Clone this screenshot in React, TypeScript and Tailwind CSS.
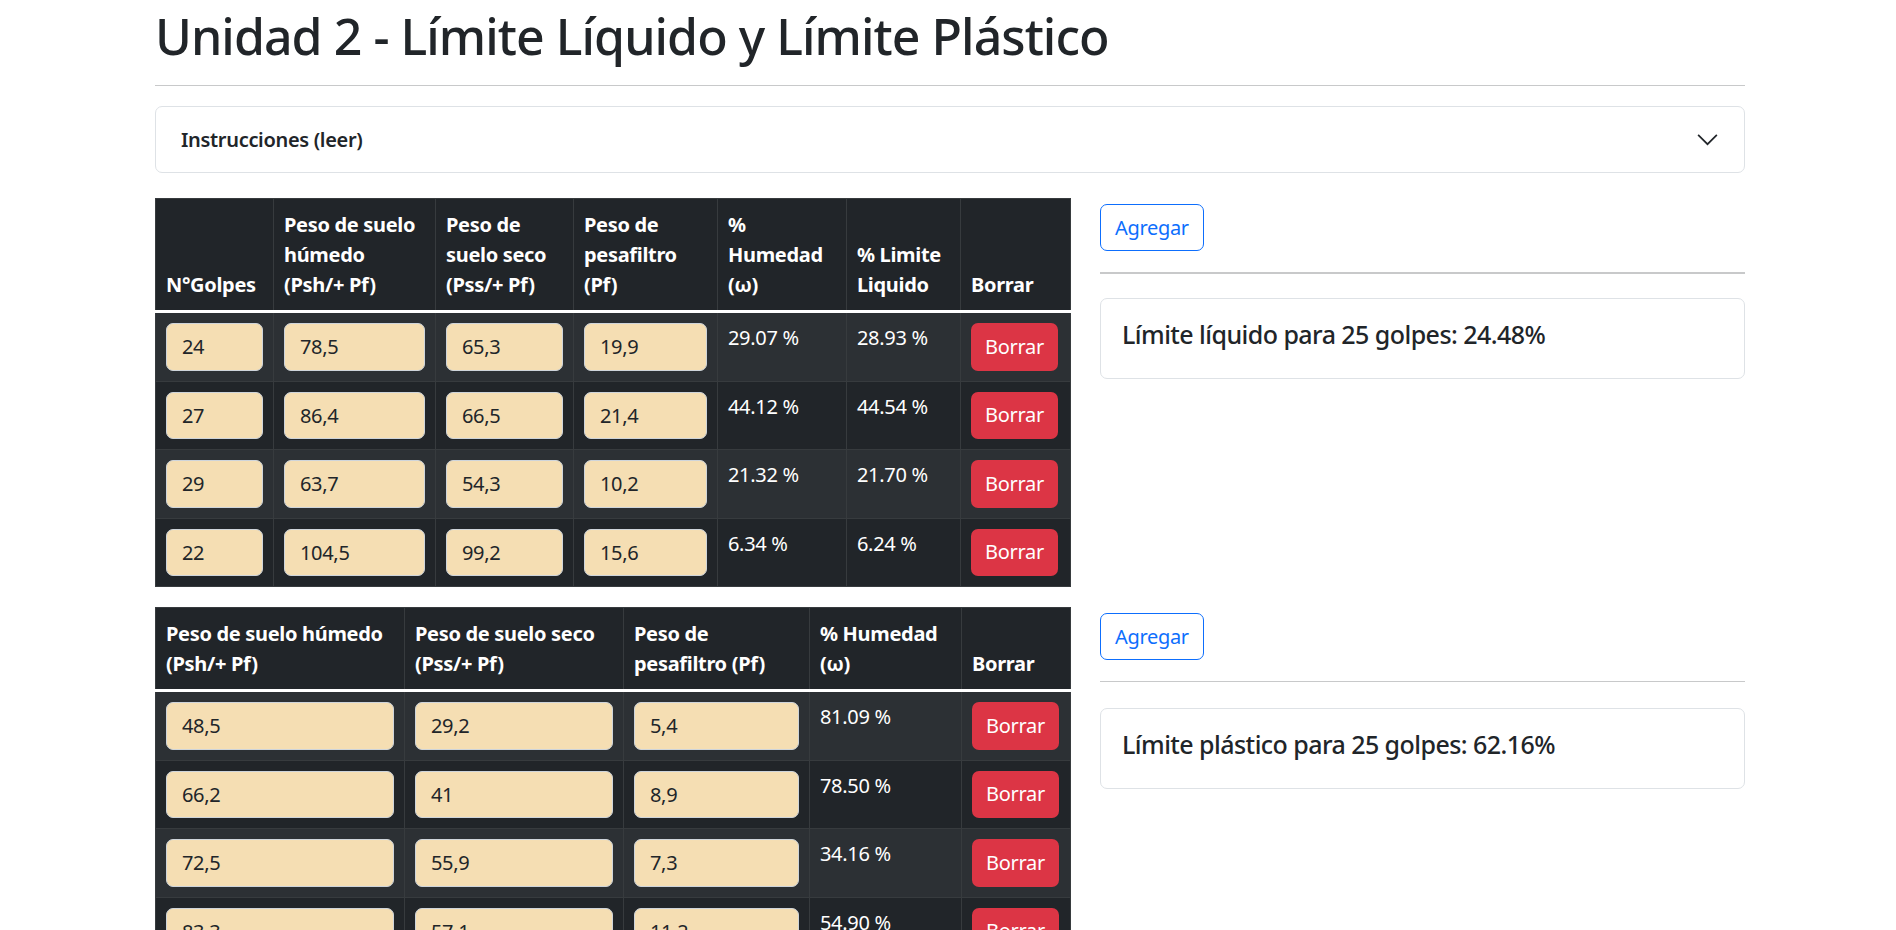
import React from "react"

const liquidRows = [
  ["24", "78,5", "65,3", "19,9", "29.07 %", "28.93 %"],
  ["27", "86,4", "66,5", "21,4", "44.12 %", "44.54 %"],
  ["29", "63,7", "54,3", "10,2", "21.32 %", "21.70 %"],
  ["22", "104,5", "99,2", "15,6", "6.34 %", "6.24 %"],
]

const plasticRows = [
  ["48,5", "29,2", "5,4", "81.09 %"],
  ["66,2", "41", "8,9", "78.50 %"],
  ["72,5", "55,9", "7,3", "34.16 %"],
  ["83,3", "57,1", "11,2", "54.90 %"],
]

function Field({ value }: { value: string }) {
  return (
    <input
      defaultValue={value}
      className="block w-full h-[47.5px] rounded-[7px] border border-[#ced4da] bg-[#f5deb3] px-[15px] text-[20px] leading-[30px] text-[#212529] outline-none"
    />
  )
}

function DeleteButton() {
  return (
    <button className="h-[47.5px] w-[87px] rounded-[7px] bg-[#dc3545] text-[20px] leading-[30px] text-white">
      Borrar
    </button>
  )
}

function SidePanel({ label, hrClass }: { label: string; hrClass: string }) {
  return (
    <div className="flex flex-col">
      <button className="self-start h-[47px] rounded-[7px] border border-[#0d6efd] px-[14px] text-[20px] leading-[30px] text-[#0d6efd]">
        Agregar
      </button>
      <div className={hrClass} />
      <div className="h-[81px] rounded-[7px] border border-[#dee2e6] px-[21px] pt-[20px]">
        <h5 className="text-[25px] leading-[30px] font-medium tracking-[-0.022em] text-[#212529]">{label}</h5>
      </div>
    </div>
  )
}

const th = "border border-[#373b3e] px-[10px] pt-[11px] pb-[10px] text-left align-bottom font-bold whitespace-nowrap"
const td = "border border-[#373b3e] p-[10px] align-top"
const first = "border-t-[3px] border-t-white"

export default function App() {
  return (
    <div className="min-h-screen bg-white font-['Noto_Sans',sans-serif] text-[#212529] tracking-[-0.02em]">
      <div className="ml-[155px] w-[1590px] pt-[6px]">
        <h1 className="text-[50px] leading-[60px] font-medium tracking-[-0.019em]">Unidad 2 - Límite Líquido y Límite Plástico</h1>
        <div className="mt-[19px] h-px bg-[#c8c9ca]" />

        <div className="mt-[20px] flex h-[67px] items-center justify-between rounded-[7px] border border-[#dee2e6] pl-[25px] pr-[24px]">
          <span className="text-[20px] font-semibold">Instrucciones (leer)</span>
          <svg width="25" height="25" viewBox="0 0 16 16" fill="none">
            <path d="M2 5L8 11L14 5" stroke="#212529" strokeWidth="1.1" />
          </svg>
        </div>

        <div className="mt-[25px] flex gap-[30px]">
          <div className="w-[915px]">
            <table className="w-[915px] table-fixed bg-[#212529] text-[20px] leading-[30px] text-white">
              <colgroup>
                <col className="w-[118px]" />
                <col className="w-[162px]" />
                <col className="w-[138px]" />
                <col className="w-[144px]" />
                <col className="w-[129px]" />
                <col className="w-[114px]" />
                <col className="w-[110px]" />
              </colgroup>
              <thead>
                <tr>
                  <th className={th}>N°Golpes</th>
                  <th className={th}>Peso de suelo<br />húmedo<br />(Psh/+ Pf)</th>
                  <th className={th}>Peso de<br />suelo seco<br />(Pss/+ Pf)</th>
                  <th className={th}>Peso de<br />pesafiltro<br />(Pf)</th>
                  <th className={th}>%<br />Humedad<br />(ω)</th>
                  <th className={th}>% Limite<br />Liquido</th>
                  <th className={th}>Borrar</th>
                </tr>
              </thead>
              <tbody>
                {liquidRows.map((r, i) => (
                  <tr key={i} className={i % 2 === 0 ? "bg-[#2c3034]" : "bg-[#212529]"}>
                    {r.slice(0, 4).map((v, j) => (
                      <td key={j} className={`${td} ${i === 0 ? first : ""}`}>
                        <Field value={v} />
                      </td>
                    ))}
                    <td className={`${td} ${i === 0 ? first : ""}`}>{r[4]}</td>
                    <td className={`${td} ${i === 0 ? first : ""}`}>{r[5]}</td>
                    <td className={`${td} ${i === 0 ? first : ""}`}>
                      <DeleteButton />
                    </td>
                  </tr>
                ))}
              </tbody>
            </table>

            <table className="mt-[20px] w-[915px] table-fixed bg-[#212529] text-[20px] leading-[30px] text-white">
              <colgroup>
                <col className="w-[249px]" />
                <col className="w-[219px]" />
                <col className="w-[186px]" />
                <col className="w-[152px]" />
                <col className="w-[109px]" />
              </colgroup>
              <thead>
                <tr>
                  <th className={th}>Peso de suelo húmedo<br />(Psh/+ Pf)</th>
                  <th className={th}>Peso de suelo seco<br />(Pss/+ Pf)</th>
                  <th className={th}>Peso de<br />pesafiltro (Pf)</th>
                  <th className={th}>% Humedad<br />(ω)</th>
                  <th className={th}>Borrar</th>
                </tr>
              </thead>
              <tbody>
                {plasticRows.map((r, i) => (
                  <tr key={i} className={i % 2 === 0 ? "bg-[#2c3034]" : "bg-[#212529]"}>
                    {r.slice(0, 3).map((v, j) => (
                      <td key={j} className={`${td} ${i === 0 ? first : ""}`}>
                        <Field value={v} />
                      </td>
                    ))}
                    <td className={`${td} ${i === 0 ? first : ""}`}>{r[3]}</td>
                    <td className={`${td} ${i === 0 ? first : ""}`}>
                      <DeleteButton />
                    </td>
                  </tr>
                ))}
              </tbody>
            </table>
          </div>

          <div className="w-[645px]">
            <div className="pt-[6px]">
              <SidePanel label="Límite líquido para 25 golpes: 24.48%" hrClass="mt-[21px] mb-[24px] h-[2px] bg-[#c8c9ca]" />
            </div>
            <div className="pt-[234px]">
              <SidePanel label="Límite plástico para 25 golpes: 62.16%" hrClass="mt-[21px] mb-[26px] h-px bg-[#c8c9ca]" />
            </div>
          </div>
        </div>
      </div>
    </div>
  )
}
